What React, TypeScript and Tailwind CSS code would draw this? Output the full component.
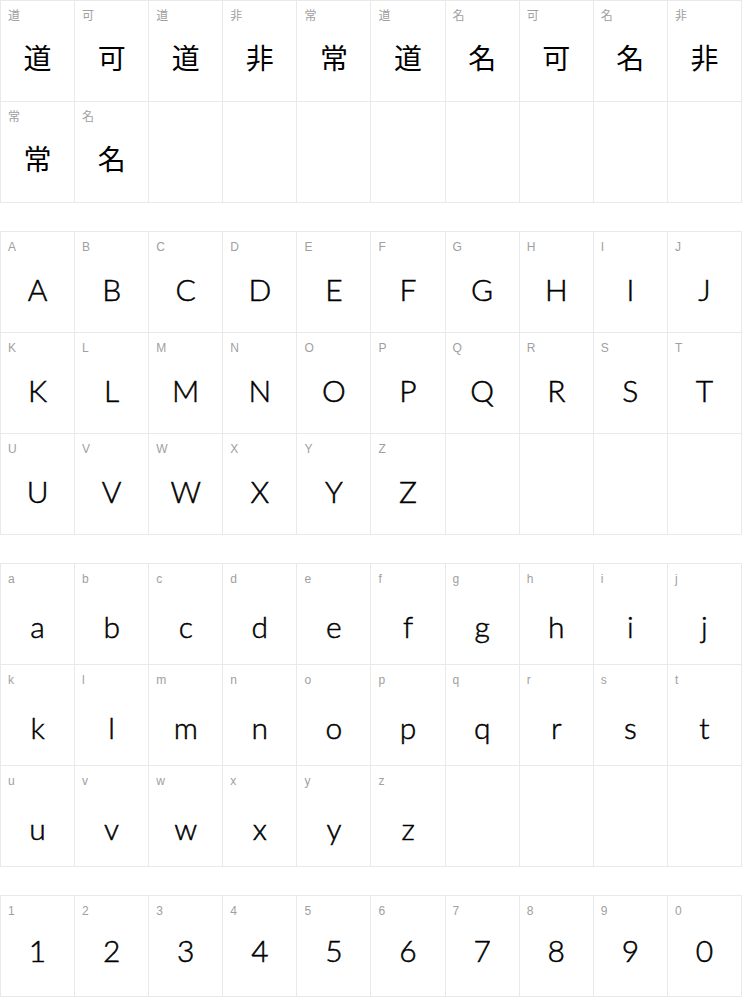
import React from "react";

const sections: { chars: string[]; offset: string; cjk: boolean }[] = [
  { chars: ["道", "可", "道", "非", "常", "道", "名", "可", "名", "非", "常", "名"], offset: "mt-[20px]", cjk: true },
  { chars: "ABCDEFGHIJKLMNOPQRSTUVWXYZ".split(""), offset: "mt-[20px]", cjk: false },
  { chars: "abcdefghijklmnopqrstuvwxyz".split(""), offset: "mt-[25px]", cjk: false },
  { chars: "1234567890".split(""), offset: "mt-[17px]", cjk: false },
];

function Cell({ ch, cjk, offset }: { ch: string; cjk: boolean; offset: string }) {
  return (
    <div className="h-[101px] border-r border-b border-[#e9e9e9] flex flex-col">
      <div
        className="pl-[7px] pt-[8px] h-[22px] text-[12px] leading-[14px] text-[#a0a0a0]"
        style={{ fontFamily: '"Liberation Sans", "Noto Sans CJK JP", sans-serif' }}
      >
        {ch}
      </div>
      {cjk ? (
        <div
          className={`${offset} text-center text-[28px] leading-[28px] text-black`}
          style={{ fontFamily: '"Noto Sans CJK JP", sans-serif' }}
        >
          {ch}
        </div>
      ) : (
        <div
          className={`${offset} text-center text-[30px] leading-[30px] text-black font-light [-webkit-text-stroke:0.5px_#000]`}
          style={{ fontFamily: 'Lato, "Noto Sans CJK JP", sans-serif' }}
        >
          {ch}
        </div>
      )}
    </div>
  );
}

function Section({ chars, cjk, offset }: { chars: string[]; cjk: boolean; offset: string }) {
  const rows = Math.ceil(chars.length / 10);
  const cells: (string | null)[] = [...chars];
  while (cells.length < rows * 10) cells.push(null);
  return (
    <div className="grid grid-cols-10 border-l border-t border-[#e9e9e9]">
      {cells.map((c, i) =>
        c === null ? (
          <div key={i} className="h-[101px] border-r border-b border-[#e9e9e9]" />
        ) : (
          <Cell key={i} ch={c} cjk={cjk} offset={offset} />
        )
      )}
    </div>
  );
}

export default function App() {
  return (
    <div className="w-[742px] bg-white flex flex-col gap-[28px]">
      {sections.map((s, i) => (
        <Section key={i} chars={s.chars} cjk={s.cjk} offset={s.offset} />
      ))}
    </div>
  );
}
